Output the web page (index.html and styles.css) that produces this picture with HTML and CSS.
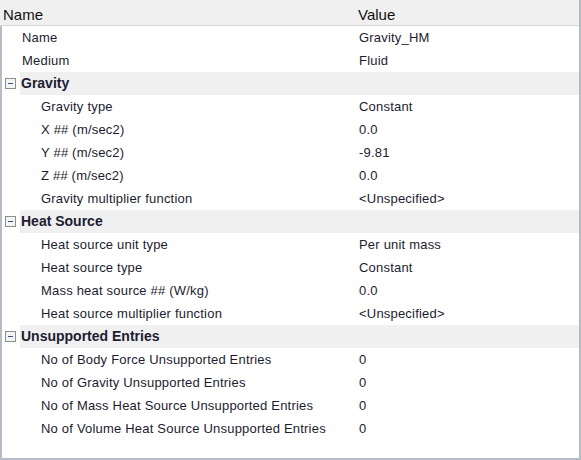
FILE: index.html
```html
<!DOCTYPE html>
<html>
<head>
<meta charset="utf-8">
<link rel="stylesheet" href="styles.css">
</head>
<body>
<div class="grid">
  <div class="header">
    <div class="hname">Name</div>
    <div class="hval">Value</div>
  </div>
  <div class="body">
    <div class="row lvl1"><span class="n">Name</span><span class="v">Gravity_HM</span></div>
    <div class="row lvl1"><span class="n">Medium</span><span class="v">Fluid</span></div>
    <div class="group"><span class="tog"><span class="box"></span></span><span class="gt">Gravity</span></div>
    <div class="row lvl2"><span class="n">Gravity type</span><span class="v">Constant</span></div>
    <div class="row lvl2"><span class="n">X ## (m/sec2)</span><span class="v">0.0</span></div>
    <div class="row lvl2"><span class="n">Y ## (m/sec2)</span><span class="v">-9.81</span></div>
    <div class="row lvl2"><span class="n">Z ## (m/sec2)</span><span class="v">0.0</span></div>
    <div class="row lvl2"><span class="n">Gravity multiplier function</span><span class="v">&lt;Unspecified&gt;</span></div>
    <div class="group"><span class="tog"><span class="box"></span></span><span class="gt">Heat Source</span></div>
    <div class="row lvl2"><span class="n">Heat source unit type</span><span class="v">Per unit mass</span></div>
    <div class="row lvl2"><span class="n">Heat source type</span><span class="v">Constant</span></div>
    <div class="row lvl2"><span class="n">Mass heat source ## (W/kg)</span><span class="v">0.0</span></div>
    <div class="row lvl2"><span class="n">Heat source multiplier function</span><span class="v">&lt;Unspecified&gt;</span></div>
    <div class="group"><span class="tog"><span class="box"></span></span><span class="gt">Unsupported Entries</span></div>
    <div class="row lvl2"><span class="n">No of Body Force Unsupported Entries</span><span class="v">0</span></div>
    <div class="row lvl2"><span class="n">No of Gravity Unsupported Entries</span><span class="v">0</span></div>
    <div class="row lvl2"><span class="n">No of Mass Heat Source Unsupported Entries</span><span class="v">0</span></div>
    <div class="row lvl2"><span class="n">No of Volume Heat Source Unsupported Entries</span><span class="v">0</span></div>
  </div>
</div>
</body>
</html>
```

FILE: styles.css
```css
html, body {
  margin: 0;
  padding: 0;
  background: #ffffff;
}
.grid {
  width: 579px;
  height: 458px;
  border-right: 2px solid #b4bcc6;
  border-bottom: 2px solid #b4bcc6;
  font-family: "Liberation Sans", Arial, sans-serif;
  color: #1c1c30;
  display: flex;
  flex-direction: column;
  box-sizing: content-box;
}
.header {
  box-sizing: border-box;
  height: 26px;
  padding-top: 4px;
  background: #f0f0f0;
  border-bottom: 1px solid #d6d9dd;
  display: flex;
  align-items: center;
  font-size: 15px;
  color: #101010;
  flex: none;
}
.hname {
  width: 355px;
  padding-left: 3px;
}
.row {
  height: 23px;
  display: flex;
  align-items: center;
  font-size: 13px;
  letter-spacing: 0.2px;
}
.row .n {
  flex: none;
}
.lvl1 .n {
  width: 337px;
  padding-left: 20px;
}
.lvl2 .n {
  width: 318px;
  padding-left: 39px;
}
.body {
  flex: 1;
  border-left: 2px solid #b4bcc6;
}
.group {
  height: 23px;
  display: flex;
  align-items: center;
  font-size: 14px;
  font-weight: bold;
}
.tog {
  width: 15px;
  height: 23px;
  display: flex;
  align-items: center;
  padding-left: 3px;
  background: #ffffff;
}
.box {
  width: 9px;
  height: 9px;
  border: 1px solid #8e8e8e;
  background: #f4f4f4;
  position: relative;
}
.box::after {
  content: "";
  position: absolute;
  left: 2px;
  right: 2px;
  top: 4px;
  height: 1px;
  background: #3b4a8a;
}
.gt {
  flex: 1;
  height: 23px;
  line-height: 23px;
  background: #f0f0f0;
  padding-left: 1px;
}
```
